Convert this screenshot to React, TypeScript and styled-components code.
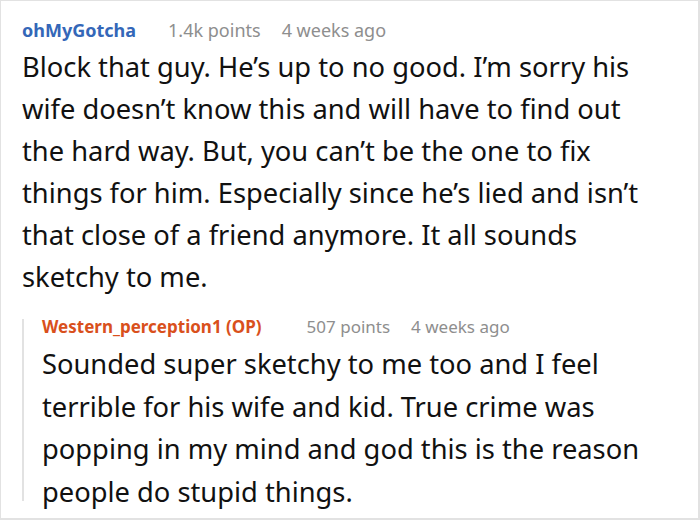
import React from "react";
import styled, { createGlobalStyle } from "styled-components";

const GlobalStyle = createGlobalStyle`
  html, body {
    margin: 0;
    padding: 0;
    background: #ffffff;
  }
  body {
    font-family: "Noto Sans", "Open Sans", sans-serif;
  }
`;

const Frame = styled.div`
  box-sizing: border-box;
  width: 700px;
  height: 520px;
  border: 1px solid #e2e2e2;
  border-right-width: 2px;
  border-bottom-width: 2px;
  padding: 16px 38px 0 21px;
  overflow: hidden;
`;

const Comment = styled.div`
  display: flex;
  flex-direction: column;
`;

const Meta = styled.div<{ $size: number; $authorGap: number }>`
  display: flex;
  align-items: baseline;
  gap: 21px;
  font-size: ${(p) => p.$size}px;
  line-height: 26px;
  white-space: nowrap;

  & > span:first-child {
    margin-right: ${(p) => p.$authorGap - 21}px;
  }
`;

const Author = styled.span<{ $color: string }>`
  font-weight: 700;
  color: ${(p) => p.$color};
`;

const Info = styled.span`
  color: #8e8e8e;
`;

const Body = styled.p<{ $lh: number }>`
  margin: 3px 0 0;
  font-size: 27.3px;
  line-height: ${(p) => p.$lh}px;
  color: #111111;
`;

const Reply = styled.div`
  margin-top: 16px;
  border-left: 2px solid #e2e2e2;
  border-image: linear-gradient(
      to bottom,
      transparent 6px,
      #e2e2e2 6px,
      #e2e2e2 calc(100% - 13px),
      transparent calc(100% - 13px)
    )
    1;
  padding-left: 18px;
`;

type CommentData = {
  author: string;
  color: string;
  points: string;
  when: string;
  text: string;
};

const top: CommentData = {
  author: "ohMyGotcha",
  color: "#3467b8",
  points: "1.4k points",
  when: "4 weeks ago",
  text:
    "Block that guy. He’s up to no good. I’m sorry his wife doesn’t know this and will have to find out the hard way. But, you can’t be the one to fix things for him. Especially since he’s lied and isn’t that close of a friend anymore. It all sounds sketchy to me.",
};

const reply: CommentData = {
  author: "Western_perception1 (OP)",
  color: "#d9501c",
  points: "507 points",
  when: "4 weeks ago",
  text:
    "Sounded super sketchy to me too and I feel terrible for his wife and kid. True crime was popping in my mind and god this is the reason people do stupid things.",
};

const CommentBlock: React.FC<{
  data: CommentData;
  metaSize: number;
  authorGap: number;
  lineHeight: number;
}> = ({ data, metaSize, authorGap, lineHeight }) => (
  <Comment>
    <Meta $size={metaSize} $authorGap={authorGap}>
      <Author $color={data.color}>{data.author}</Author>
      <Info>{data.points}</Info>
      <Info>{data.when}</Info>
    </Meta>
    <Body $lh={lineHeight}>{data.text}</Body>
  </Comment>
);

export default function App() {
  return (
    <>
      <GlobalStyle />
      <Frame>
        <CommentBlock data={top} metaSize={18} authorGap={32} lineHeight={42} />
        <Reply>
          <CommentBlock data={reply} metaSize={17} authorGap={45} lineHeight={42.6} />
        </Reply>
      </Frame>
    </>
  );
}
